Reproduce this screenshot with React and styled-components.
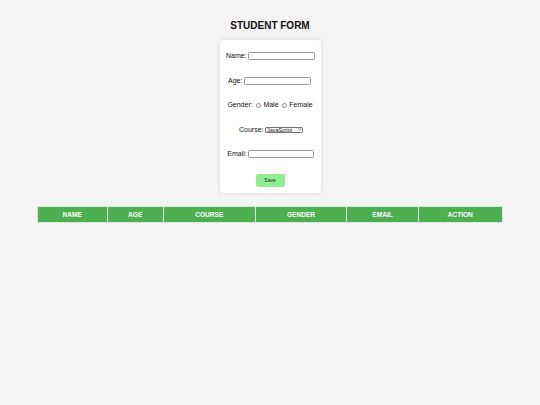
import React from "react";
import styled, { createGlobalStyle } from "styled-components";

const Global = createGlobalStyle`
  html, body { margin: 0; padding: 0; background: #f4f4f4; }
  body { font-family: "Liberation Sans", Arial, sans-serif; color: #111; }
  * { box-sizing: border-box; }
`;

const Page = styled.div`
  width: 540px;
  min-height: 405px;
  padding-top: 20px;
  display: flex;
  flex-direction: column;
  align-items: center;
`;

const Title = styled.h2`
  margin: 0;
  font-size: 10px;
  line-height: 12px;
  font-weight: bold;
  color: #111;
`;

const Card = styled.form`
  margin-top: 8px;
  width: 101px;
  height: 153px;
  background: #fff;
  border-radius: 4px;
  box-shadow: 0 0 4px rgba(0, 0, 0, 0.12);
  padding-top: 11px;
  display: flex;
  flex-direction: column;
  align-items: center;
  gap: 14.5px;
`;

const Row = styled.div`
  height: 10px;
  display: flex;
  align-items: center;
  justify-content: center;
  gap: ${(p) => p.$gap || 1.5}px;
  font-size: 7px;
  white-space: nowrap;
  margin-left: ${(p) => p.$shift || 0}px;
`;

const Label = styled.label`
  font-size: 7px;
  line-height: 10px;
  color: #111;
`;

const TextInput = styled.input`
  width: ${(p) => p.$w || 67}px;
  height: 8px;
  border: 1px solid #9a9a9a;
  border-radius: 1.5px;
  padding: 0;
  margin: 0;
  background: #fff;
  outline: none;
`;

const Radio = styled.span`
  width: 5px;
  height: 5px;
  border: 0.7px solid #8a8a8a;
  border-radius: 50%;
  display: inline-block;
  margin: 0 1.2px 0 1.5px;
`;

const SelectWrap = styled.span`
  position: relative;
  display: inline-flex;
`;

const Select = styled.select`
  appearance: none;
  -webkit-appearance: none;
  width: 38px;
  height: 6px;
  border: 0.7px solid #777;
  border-radius: 1px;
  background: #fff;
  font-family: "Liberation Sans", Arial, sans-serif;
  font-size: 5.4px;
  line-height: 5px;
  padding: 0 0 0 1px;
  margin: 0;
  color: #111;
  outline: none;
`;

const Chevron = styled.svg`
  position: absolute;
  right: 1.4px;
  top: 1.9px;
  width: 3.4px;
  height: 2.4px;
  pointer-events: none;
`;

const SaveButton = styled.button`
  margin-top: 0.8px;
  width: 29px;
  height: 12.4px;
  border: none;
  border-radius: 2px;
  background: #90ee90;
  font-family: "Liberation Sans", Arial, sans-serif;
  font-size: 5px;
  color: #222;
  padding: 0;
`;

const Table = styled.table`
  margin-top: 13px;
  width: 465px;
  margin-left: -0.5px;
  border-collapse: collapse;
  table-layout: fixed;
`;

const Th = styled.th`
  height: 16px;
  padding: 0;
  background: #4caf50;
  color: #fff;
  font-size: 6.6px;
  font-weight: bold;
  text-align: center;
  border: 1px solid #e2e2e2;
  border-top-color: #d6ead6;
`;

const columns = [
  ["NAME", 70],
  ["AGE", 56],
  ["COURSE", 92],
  ["GENDER", 91.5],
  ["EMAIL", 71.5],
  ["ACTION", 84],
];

export default function App() {
  return (
    <>
      <Global />
      <Page>
        <Title>STUDENT FORM</Title>
        <Card onSubmit={(e) => e.preventDefault()}>
          <Row $shift={1}>
            <Label>Name:</Label>
            <TextInput />
          </Row>
          <Row $shift={-1}>
            <Label>Age:</Label>
            <TextInput />
          </Row>
          <Row $gap={1.5}>
            <Label>Gender:</Label>
            <Radio />
            <Label>Male</Label>
            <Radio />
            <Label>Female</Label>
          </Row>
          <Row $shift={2}>
            <Label>Course:</Label>
            <SelectWrap>
              <Select defaultValue="JavaScript">
                <option>JavaScript</option>
                <option>Python</option>
                <option>Java</option>
              </Select>
              <Chevron viewBox="0 0 10 7">
                <path d="M1 1.5 L5 5.5 L9 1.5" fill="none" stroke="#111" strokeWidth="2" />
              </Chevron>
            </SelectWrap>
          </Row>
          <Row $shift={1}>
            <Label>Email:</Label>
            <TextInput $w={65.5} />
          </Row>
          <SaveButton type="submit">Save</SaveButton>
        </Card>
        <Table>
          <colgroup>
            {columns.map(([n, w]) => (
              <col key={n} style={{ width: w }} />
            ))}
          </colgroup>
          <thead>
            <tr>
              {columns.map(([n]) => (
                <Th key={n}>{n}</Th>
              ))}
            </tr>
          </thead>
        </Table>
      </Page>
    </>
  );
}
